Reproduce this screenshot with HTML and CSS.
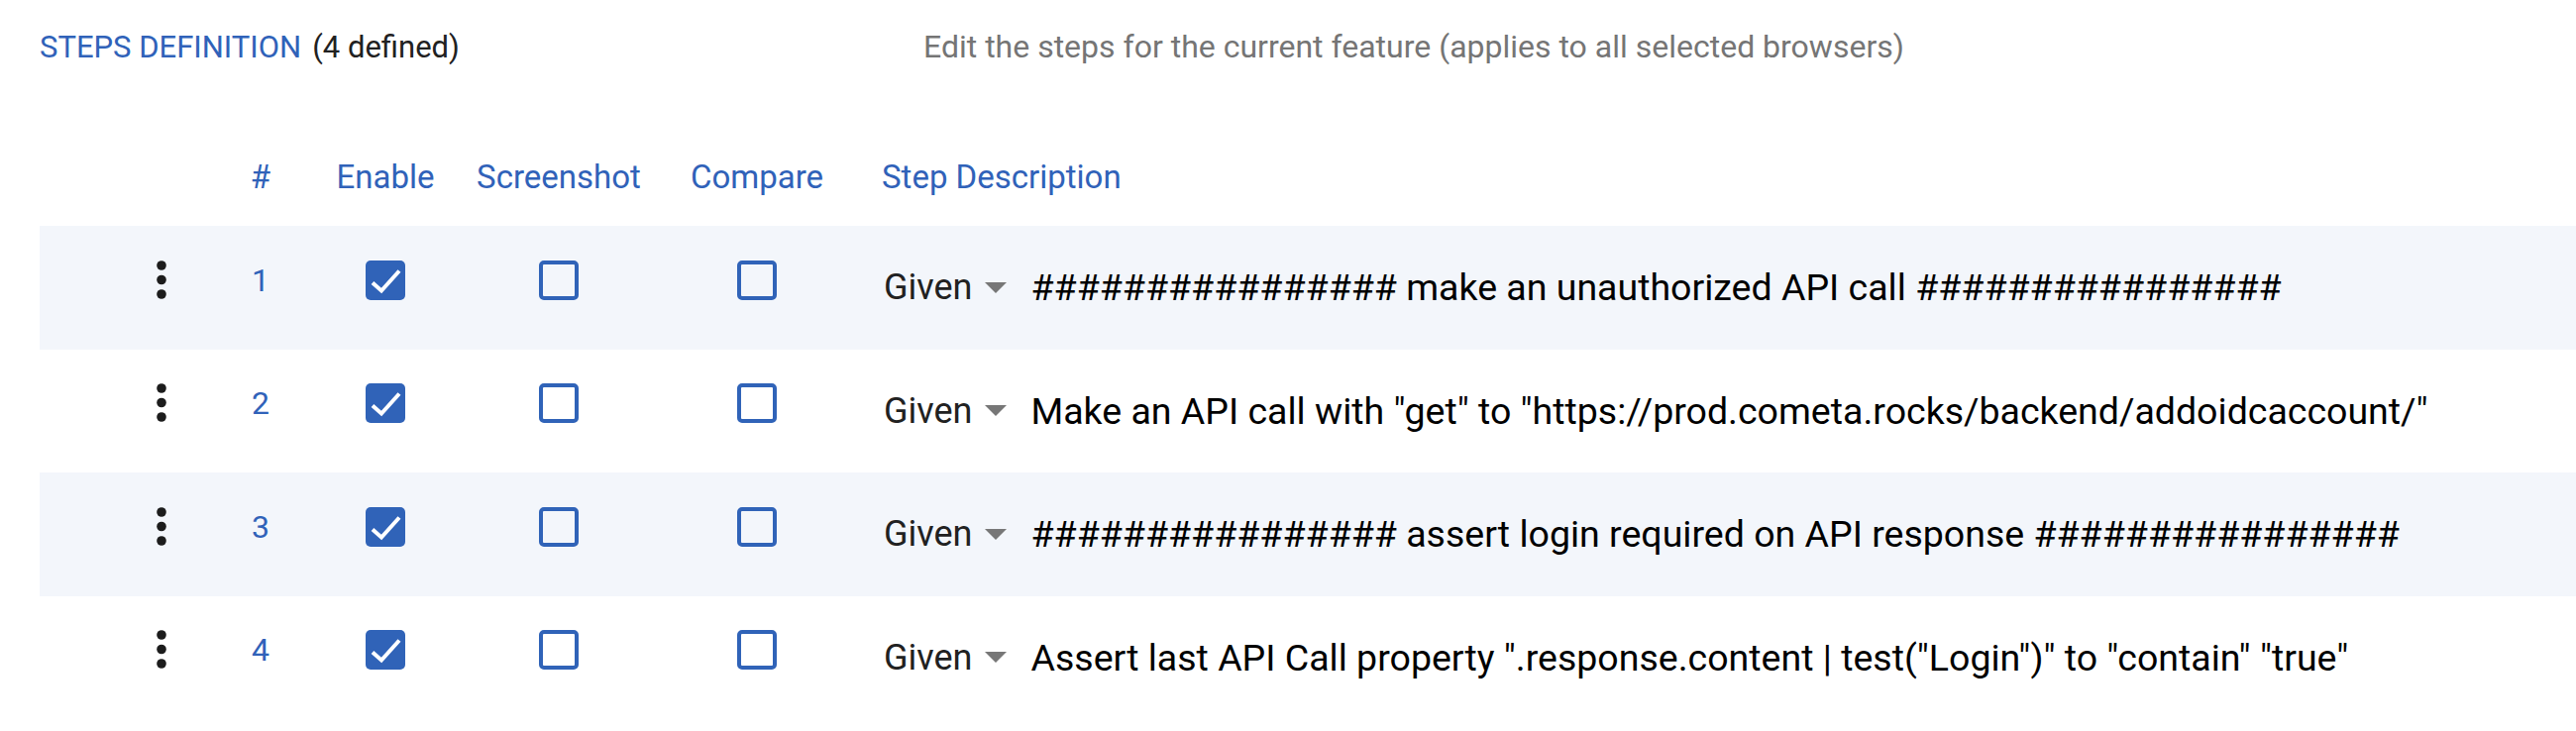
FILE: index.html
```html
<!DOCTYPE html>
<html>
<head>
<meta charset="utf-8">
<link rel="stylesheet" href="styles.css">
</head>
<body>
<div class="page">
  <div class="top">
    <div class="title-group"><span class="title">STEPS DEFINITION</span><span class="count">(4 defined)</span></div>
    <div class="subtitle">Edit the steps for the current feature (applies to all selected browsers)</div>
  </div>
  <div class="grid head">
    <div></div>
    <div class="cell">#</div>
    <div class="cell">Enable</div>
    <div class="cell">Screenshot</div>
    <div class="cell">Compare</div>
    <div class="desc-head">Step Description</div>
  </div>

  <div class="grid row shaded">
    <div class="cell ctl"><svg class="dots" width="10" height="40" viewBox="0 0 10 40"><circle cx="5" cy="5" r="4.8"/><circle cx="5" cy="19.5" r="4.8"/><circle cx="5" cy="34" r="4.8"/></svg></div>
    <div class="cell ctl num">1</div>
    <div class="cell ctl"><span class="box checked"><svg width="40" height="40" viewBox="0 0 40 40"><path d="M7 22.5 L16 30.5 L34 10.5"/></svg></span></div>
    <div class="cell ctl"><span class="box"></span></div>
    <div class="cell ctl"><span class="box"></span></div>
    <div class="desc"><span class="kw">Given</span><span class="tri"></span><span class="text">################ make an unauthorized API call ################</span></div>
  </div>

  <div class="grid row">
    <div class="cell ctl"><svg class="dots" width="10" height="40" viewBox="0 0 10 40"><circle cx="5" cy="5" r="4.8"/><circle cx="5" cy="19.5" r="4.8"/><circle cx="5" cy="34" r="4.8"/></svg></div>
    <div class="cell ctl num">2</div>
    <div class="cell ctl"><span class="box checked"><svg width="40" height="40" viewBox="0 0 40 40"><path d="M7 22.5 L16 30.5 L34 10.5"/></svg></span></div>
    <div class="cell ctl"><span class="box"></span></div>
    <div class="cell ctl"><span class="box"></span></div>
    <div class="desc"><span class="kw">Given</span><span class="tri"></span><span class="text">Make an API call with "get" to "https://prod.cometa.rocks/backend/addoidcaccount/"</span></div>
  </div>

  <div class="grid row shaded">
    <div class="cell ctl"><svg class="dots" width="10" height="40" viewBox="0 0 10 40"><circle cx="5" cy="5" r="4.8"/><circle cx="5" cy="19.5" r="4.8"/><circle cx="5" cy="34" r="4.8"/></svg></div>
    <div class="cell ctl num">3</div>
    <div class="cell ctl"><span class="box checked"><svg width="40" height="40" viewBox="0 0 40 40"><path d="M7 22.5 L16 30.5 L34 10.5"/></svg></span></div>
    <div class="cell ctl"><span class="box"></span></div>
    <div class="cell ctl"><span class="box"></span></div>
    <div class="desc"><span class="kw">Given</span><span class="tri"></span><span class="text">################ assert login required on API response ################</span></div>
  </div>

  <div class="grid row">
    <div class="cell ctl"><svg class="dots" width="10" height="40" viewBox="0 0 10 40"><circle cx="5" cy="5" r="4.8"/><circle cx="5" cy="19.5" r="4.8"/><circle cx="5" cy="34" r="4.8"/></svg></div>
    <div class="cell ctl num">4</div>
    <div class="cell ctl"><span class="box checked"><svg width="40" height="40" viewBox="0 0 40 40"><path d="M7 22.5 L16 30.5 L34 10.5"/></svg></span></div>
    <div class="cell ctl"><span class="box"></span></div>
    <div class="cell ctl"><span class="box"></span></div>
    <div class="desc"><span class="kw">Given</span><span class="tri"></span><span class="text">Assert last API Call property ".response.content | test("Login")" to "contain" "true"</span></div>
  </div>
</div>
</body>
</html>
```

FILE: styles.css
```css
html, body {
  margin: 0;
  padding: 0;
  background: #ffffff;
}

body {
  font-family: Roboto, "Liberation Sans", sans-serif;
  color: #212121;
}

.page {
  padding: 29px 0 0 40px;
}

.top {
  display: flex;
  align-items: baseline;
  line-height: 36px;
  font-size: 31px;
}

.title-group {
  flex: 0 0 892px;
}

.title {
  color: #3062b9;
  margin-right: 11px;
}

.count {
  color: #212121;
}

.subtitle {
  color: #757575;
  font-size: 32px;
}

.grid {
  display: grid;
  grid-template-columns: 60px 140px 112px 238px 162px 1fr;
  padding-left: 93px;
  align-items: center;
}

.head {
  margin-top: 94px;
  margin-bottom: 30px;
  height: 38px;
  line-height: 38px;
  font-size: 33px;
  color: #3062b9;
}

.cell {
  display: flex;
  justify-content: center;
  align-items: center;
}

.desc-head {
  padding-left: 45px;
}

.row {
  height: 124.5px;
}

.shaded {
  background: #f3f6fb;
}

.ctl {
  margin-bottom: 15px;
}

.dots {
  display: block;
  fill: #1c1c1c;
}

.num {
  color: #3062b9;
  font-size: 32px;
  line-height: 38px;
}

.box {
  box-sizing: border-box;
  width: 40px;
  height: 40px;
  border: 4.7px solid #3063b8;
  border-radius: 5px;
  display: block;
}

.box.checked {
  background: #3063b8;
  border: none;
}

.box.checked svg {
  display: block;
}

.box.checked path {
  fill: none;
  stroke: #ffffff;
  stroke-width: 4px;
}

.desc {
  display: flex;
  align-items: center;
  padding-left: 47px;
  font-size: 36px;
  line-height: 44px;
  white-space: nowrap;
}

.kw {
  color: #212121;
}

.tri {
  width: 0;
  height: 0;
  border-left: 11px solid transparent;
  border-right: 11px solid transparent;
  border-top: 11px solid #777777;
  margin-left: 13px;
  margin-right: 24px;
}

.text {
  color: #000000;
  font-size: 37.5px;
}
```
